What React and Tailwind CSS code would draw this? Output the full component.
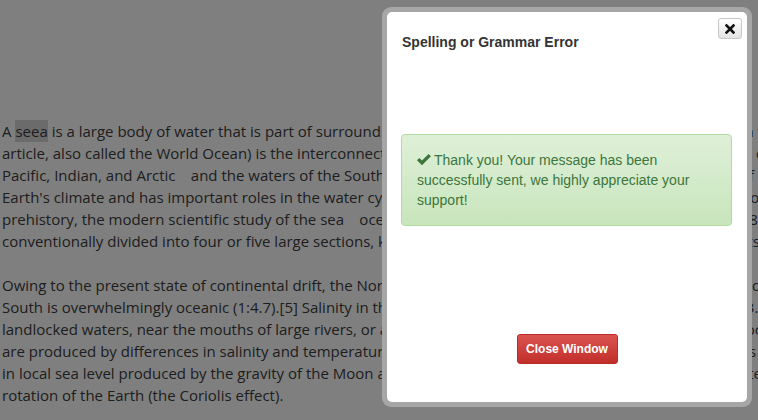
export default function App() {
  const line = "whitespace-nowrap overflow-hidden";
  return (
    <div className="relative w-[758px] h-[420px] overflow-hidden bg-white">
      <div className="pt-[120px] pl-[2px] font-['Open_Sans',sans-serif] text-[15px] leading-[22px] text-[#3c3c3c]">
        <div className="mb-[22px]">
          <div className={line}>
            A <span className="bg-[#d6d6d6] py-[1px]">seea</span> is a large body of water that is part of surrounding ocean. The sea (see the main ocean
            and article on the seas)
          </div>
          <div className={line}>
            article, also called the World Ocean) is the interconnected system of all Earth's oceanic waters, including the divisions
          </div>
          <div className={line}>
            Pacific, Indian, and Arctic <span className="opacity-0">–</span> and the waters of the Southern Ocean, which together cover about 71 percent of the world
          </div>
          <div className={line}>
            Earth's climate and has important roles in the water cycle, carbon cycle, and nitrogen cycle. It has been explored since
          </div>
          <div className={line}>
            prehistory, the modern scientific study of the sea <span className="opacity-0">–</span> oceanography <span className="opacity-0">–</span> dates broadly to the expedition in the 1870s. The sea is
          </div>
          <div className={line}>
            conventionally divided into four or five large sections, known as oceans, that are separated by the continents or other
          </div>
        </div>
        <div>
          <div className={line}>
            Owing to the present state of continental drift, the Northern Hemisphere is fairly balanced between land and water, versus
          </div>
          <div className={line}>
            South is overwhelmingly oceanic (1:4.7).[5] Salinity in the open ocean is generally in a narrow band around 3.5% by mass
          </div>
          <div className={line}>
            landlocked waters, near the mouths of large rivers, or at great depths. About 85% of the solids in the open ocean are
          </div>
          <div className={line}>
            are produced by differences in salinity and temperature. Surface currents are formed by friction from waves produced
          </div>
          <div className={line}>
            in local sea level produced by the gravity of the Moon and, to a lesser extent, the Sun; the currents it's affected by
          </div>
          <div className={line}>rotation of the Earth (the Coriolis effect).</div>
        </div>
      </div>

      <div className="absolute inset-0 bg-black/50" />

      <div className="absolute left-[382px] top-[7px] w-[370px] h-[400px] rounded-[9px] bg-[#a6a6a6] p-[5px]">
        <div className="relative h-full rounded-[5px] bg-white flex flex-col font-['Liberation_Sans',Arial,sans-serif]">
          <button className="absolute right-[5px] top-[6px] w-[24px] h-[21px] flex items-center justify-center rounded-[3px] border border-[#c8c8c8] bg-linear-to-b from-white to-[#e2e2e2]">
            <svg width="10" height="10" viewBox="0 0 10 10">
              <path d="M1.5 1.5 L8.5 8.5 M8.5 1.5 L1.5 8.5" stroke="#111" strokeWidth="2.6" strokeLinecap="square" />
            </svg>
          </button>
          <h3 className="mt-[20px] ml-[15px] text-[14px] leading-[20px] font-bold text-[#333]">
            Spelling or Grammar Error
          </h3>
          <div className="mt-[82px] ml-[14px] mr-[15px] rounded-[4px] border border-[#b2dba1] bg-linear-to-b from-[#dff0d8] to-[#c8e5bc] p-[15px] text-[14px] leading-[20px] text-[#3c763d]">
            <svg width="14" height="12" viewBox="0 0 14 12" className="inline-block align-[-1px] mr-[3px]">
              <path d="M0 6.2 L2.3 3.9 L5 6.6 L11.6 0 L13.9 2.3 L5 11.2 Z" fill="#3c763d" />
            </svg>
            Thank you! Your message has been successfully sent, we highly appreciate your support!
          </div>
          <div className="mt-[108px] flex justify-center">
            <button className="h-[30px] w-[101px] rounded-[3px] border border-[#b92c28] bg-linear-to-b from-[#d9534f] to-[#c12e2a] text-[12px] font-bold text-white">
              Close Window
            </button>
          </div>
        </div>
      </div>
    </div>
  );
}
